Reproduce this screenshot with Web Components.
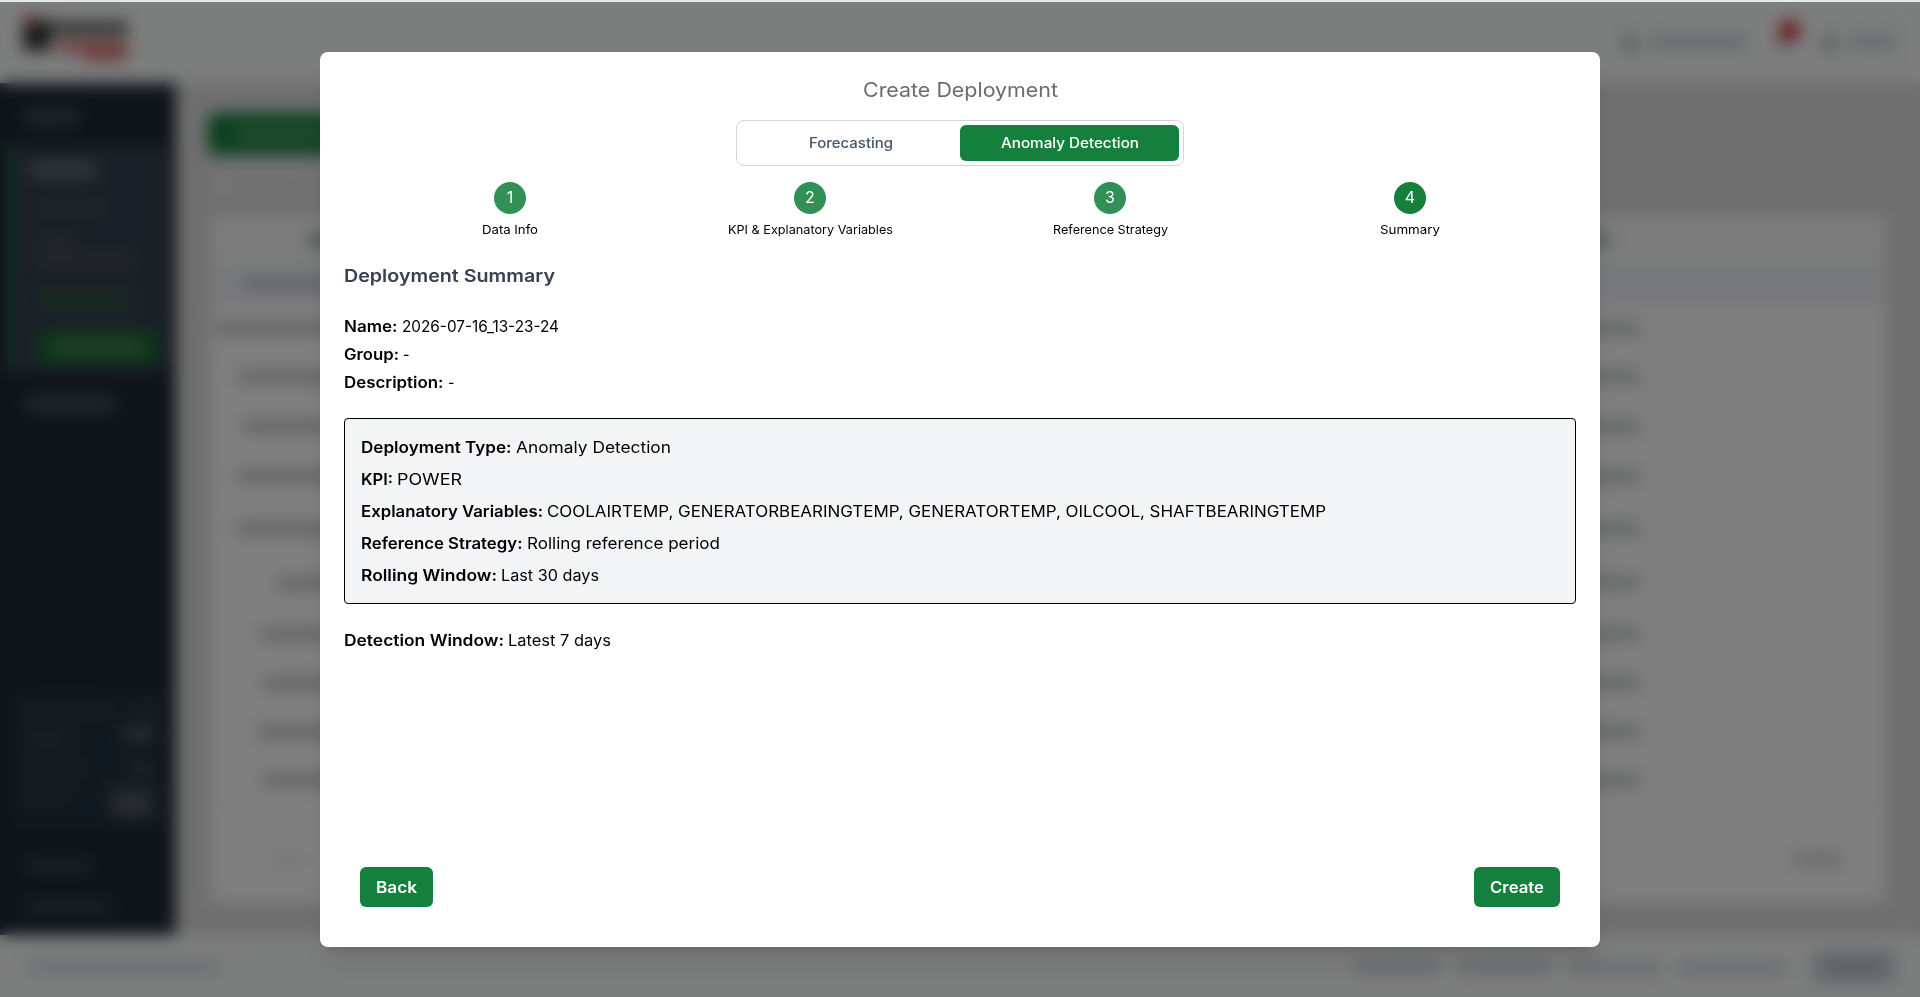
<!DOCTYPE html>
<html lang="en">
<head>
<meta charset="utf-8">
<title>Create Deployment</title>
<style>
html, body {
    margin: 0;
    height: 100%;
    overflow: hidden;
}
body {
    font-family: Inter, "Open Sans", sans-serif;
    font-size: 15.5px;
    color: #000;
    background: #fff;
}
</style>
</head>
<body>
<app-page>
	<app-header slot="header"></app-header>
	<side-nav slot="nav"></side-nav>
	<deployment-table></deployment-table>
	<app-footer slot="footer"></app-footer>
</app-page>

<modal-dialog>
	<fit-text slot="title" width="195">Create Deployment</fit-text>
	<type-toggle slot="toggle">
		<toggle-option><fit-text width="84">Forecasting</fit-text></toggle-option>
		<toggle-option active><fit-text width="138">Anomaly Detection</fit-text></toggle-option>
	</type-toggle>
	<step-bar slot="steps">
		<step-item number="1"><fit-text width="56">Data Info</fit-text></step-item>
		<step-item number="2"><fit-text width="165">KPI &amp; Explanatory Variables</fit-text></step-item>
		<step-item number="3"><fit-text width="115">Reference Strategy</fit-text></step-item>
		<step-item number="4" active><fit-text width="60">Summary</fit-text></step-item>
	</step-bar>
	<deployment-summary></deployment-summary>
	<app-button slot="actions"><fit-text width="41">Back</fit-text></app-button>
	<app-button slot="actions"><fit-text width="54">Create</fit-text></app-button>
</modal-dialog>

<script>
function attach(el, html) {
  const template = document.createElement('template');
  template.innerHTML = html;
  const root = el.attachShadow({ mode: 'open' });
  root.append(template.content.cloneNode(true));
  return root;
}

// stretches the letters so that the text takes exactly the given width
class FitText extends HTMLElement {
  constructor() {
    super();
    this.root = attach(this, `
<style>
:host { display: inline-block; white-space: nowrap; }
span { display: inline-block; transform-origin: 0 50%; }
</style>
<span><slot></slot></span>`);
  }

  connectedCallback() {
    requestAnimationFrame(() => this.fit());
  }

  fit() {
    const target = Number(this.getAttribute('width'));
    if (!target) return;
    const span = this.root.querySelector('span');
    const natural = span.getBoundingClientRect().width;
    this.style.width = `${target}px`;
    span.style.transform = `scaleX(${target / natural})`;
  }
}

// placeholder line for content that is still behind the overlay
class TextStub extends HTMLElement {
  constructor() {
    super();
    attach(this, `
<style>
:host {
    display: block;
    flex: none;
    width: var(--w, 60px);
    height: var(--h, 10px);
    margin-left: var(--x, 0);
    background: var(--c, #d0d0d0);
    border-radius: 3px;
}
</style>`);
  }
}

class AppPage extends HTMLElement {
  constructor() {
    super();
    attach(this, `
<style>
:host {
    display: grid;
    box-sizing: border-box;
    width: 100vw;
    height: 100vh;
    grid-template: 83px 1fr 62px / 176px 1fr;
    background: #dedede;
}
.header, .footer { grid-column: 1 / 3; }
main { padding: 30px 34px 33px; min-width: 0; }
</style>
<div class="header"><slot name="header"></slot></div>
<slot name="nav"></slot>
<main><slot></slot></main>
<div class="footer"><slot name="footer"></slot></div>`);
  }
}

class AppHeader extends HTMLElement {
  constructor() {
    super();
    attach(this, `
<style>
:host {
    display: flex;
    box-sizing: border-box;
    height: 83px;
    padding: 0 25px 0 20px;
    justify-content: space-between;
    background: #f9fcfa;
    border-top: 2px solid #e5eaea;
    --c: #d4d6dc;
}
.logo { width: 112px; height: 66px; }
.links { display: flex; align-items: center; gap: 12px; }
.bell { position: relative; margin: 0 20px 0 18px; }
.badge {
    position: absolute;
    left: 2px;
    top: -15px;
    width: 21px;
    height: 21px;
    border-radius: 50%;
    background: #dc2638;
}
</style>
<svg class="logo" viewBox="0 0 112 66">
	<rect x="3" y="18" width="28" height="31" fill="#383838"/>
	<rect x="30" y="19" width="78" height="14" fill="#6a6a6a"/>
	<circle cx="9" cy="17" r="6" fill="#e07070"/>
	<rect x="38" y="39" width="70" height="11" fill="#dc7070"/>
	<rect x="64" y="50" width="42" height="9" fill="#dc8080"/>
</svg>
<div class="links">
	<text-stub style="--w:16px;--h:16px;--c:#bcbfc5"></text-stub>
	<text-stub style="--w:97px;--h:15px"></text-stub>
	<div class="bell"><text-stub style="--w:14px;--h:15px;--c:#cfd0d0"></text-stub><div class="badge"></div></div>
	<text-stub style="--w:14px;--h:16px;--c:#b7bac0"></text-stub>
	<text-stub style="--w:46px;--h:15px"></text-stub>
</div>`);
  }
}

class SideNav extends HTMLElement {
  constructor() {
    super();
    attach(this, `
<style>
:host {
    display: flex;
    flex-direction: column;
    box-sizing: border-box;
    padding: 26px 8px 22px;
    background: #1f2937;
    --c: #454c58;
}
.group {
    margin-top: 22px;
    box-sizing: border-box;
    height: 225px;
    padding: 15px 10px 0 18px;
    background: #374151;
    border-left: 4px solid #15803d;
    border-radius: 4px;
}
.active {
    display: flex;
    align-items: center;
    box-sizing: border-box;
    height: 33px;
    margin: 20px 0 0 8px;
    padding-left: 14px;
    background: #14702c;
    border-radius: 6px;
}
.stats {
    display: grid;
    grid-template-columns: 1fr auto;
    align-content: start;
    box-sizing: border-box;
    height: 131px;
    margin: auto 6px 36px;
    padding: 10px 9px;
    row-gap: 14px;
    background: #21333f;
    --c: #303944;
}
.stats > :nth-child(even) { justify-self: end; }
</style>
<text-stub style="--w:54px;--h:15px;--x:16px"></text-stub>
<div class="group">
	<text-stub style="--w:66px;--h:17px;--c:#646b78"></text-stub>
	<text-stub style="--w:68px;--h:11px;--x:6px;--c:#454b58;margin-top:24px"></text-stub>
	<text-stub style="--w:34px;--h:12px;--x:8px;--c:#484d58;margin-top:22px"></text-stub>
	<text-stub style="--w:94px;--h:13px;--x:8px;--c:#484d58;margin-top:5px"></text-stub>
	<text-stub style="--w:92px;--h:22px;--x:8px;--c:#305544;margin-top:24px"></text-stub>
	<div class="active"><text-stub style="--w:92px;--h:15px;--c:#4b8059"></text-stub></div>
</div>
<text-stub style="--w:92px;--h:14px;--x:16px;margin-top:26px;--c:#4a505c"></text-stub>
<div class="stats">
	<text-stub style="--w:88px;--h:9px"></text-stub>
	<text-stub style="--w:12px;--h:10px;--c:#3d4550"></text-stub>
	<text-stub style="--w:46px;--h:22px"></text-stub>
	<text-stub style="--w:30px;--h:13px;--c:#5a606b"></text-stub>
	<text-stub style="--w:64px;--h:10px"></text-stub>
	<text-stub style="--w:22px;--h:11px;--c:#464d59"></text-stub>
	<text-stub style="--w:48px;--h:10px"></text-stub>
	<text-stub style="--w:42px;--h:30px;--c:#50565f"></text-stub>
</div>
<text-stub style="--w:68px;--h:12px;--x:16px;--c:#39424e"></text-stub>
<text-stub style="--w:88px;--h:12px;--x:16px;--c:#39424e;margin-top:29px"></text-stub>`);
  }
}

class DeploymentTable extends HTMLElement {
  constructor() {
    super();
    // left inset of the first column and row heights
    const rows = [
      [4, 48], [28, 49], [33, 50], [26, 50], [26, 55], [67, 53],
      [50, 49], [52, 49], [48, 49], [52, 48],
    ];
    attach(this, `
<style>
:host { display: flex; flex-direction: column; height: 100%; }
.create {
    display: flex;
    align-items: center;
    width: 220px;
    height: 42px;
    margin-left: -2px;
    background: #15803d;
    border-radius: 6px;
}
.search {
    display: flex;
    align-items: center;
    width: 300px;
    height: 36px;
    margin-top: 12px;
    padding-left: 20px;
    background: #e6e6e6;
    border-radius: 6px;
}
.card {
    flex: 1;
    display: flex;
    flex-direction: column;
    margin-top: 14px;
    background: #fff;
    border-radius: 6px;
}
.row {
    display: flex;
    align-items: center;
    justify-content: space-between;
    box-sizing: border-box;
    flex: none;
    padding-right: 246px;
}
.head { height: 46px; padding-right: 277px; background: #f8fbf8; }
.group { height: 41px; background: #f1f2f6; }
.pager {
    display: flex;
    flex: 1;
    align-items: center;
    justify-content: space-between;
    padding: 12px 43px 0 62px;
    border-top: 1px solid #f2f2f2;
}
</style>
<div class="create"><text-stub style="--w:160px;--h:14px;--x:24px;--c:#45995e"></text-stub></div>
<div class="search"><text-stub style="--w:78px;--h:10px;--c:#dadcda"></text-stub></div>
<div class="card">
	<div class="row head">
		<text-stub style="--w:100px;--h:14px;--x:98px;--c:#a9abb5"></text-stub>
		<text-stub style="--w:100px;--h:14px;--c:#a9abb5"></text-stub>
	</div>
	<div class="row group"><text-stub style="--w:180px;--h:14px;--x:34px;--c:#cacbd1"></text-stub></div>
	${rows.map(([x, h]) => `<div class="row" style="height:${h}px">
		<text-stub style="--w:${230 - x}px;--h:14px;--x:${x}px;--c:#ccc"></text-stub>
		<text-stub style="--w:110px;--h:15px;--c:#cdd1d1"></text-stub>
	</div>`).join('')}
	<div class="pager">
		<text-stub style="--w:34px;--h:10px;--c:#ececec"></text-stub>
		<text-stub style="--w:50px;--h:15px;--c:#d8d8d8"></text-stub>
	</div>
</div>`);
  }
}

class AppFooter extends HTMLElement {
  constructor() {
    super();
    attach(this, `
<style>
:host {
    display: flex;
    align-items: center;
    box-sizing: border-box;
    height: 62px;
    gap: 17px;
    padding: 2px 24px 0 27px;
    background: #f9fbfa;
    --c: #dedfe4;
}
.copy { margin-right: auto; }
.button {
    display: flex;
    align-items: center;
    justify-content: center;
    width: 84px;
    height: 34px;
    margin-left: 9px;
    background: #d1d3d9;
    border-radius: 6px;
}
</style>
<text-stub class="copy" style="--w:195px;--h:14px"></text-stub>
<text-stub style="--w:88px;--h:17px"></text-stub>
<text-stub style="--w:94px;--h:17px"></text-stub>
<text-stub style="--w:92px;--h:17px"></text-stub>
<text-stub style="--w:108px;--h:17px"></text-stub>
<div class="button"><text-stub style="--w:48px;--h:12px;--c:#b8bac2"></text-stub></div>`);
  }
}

class ModalDialog extends HTMLElement {
  constructor() {
    super();
    attach(this, `
<style>
:host {
    position: fixed;
    inset: 2px 0 0;
    display: flex;
    align-items: center;
    justify-content: center;
    background: rgba(0, 0, 0, 0.5);
    backdrop-filter: blur(8px);
}
.dialog {
    display: flex;
    flex-direction: column;
    align-items: center;
    box-sizing: border-box;
    width: 1280px;
    height: 895px;
    padding: 24px 24px 40px;
    background: #fff;
    border-radius: 8px;
    box-shadow: 0 20px 25px -5px rgba(0, 0, 0, 0.1), 0 8px 10px -6px rgba(0, 0, 0, 0.1);
}
h2 {
    margin: 0 0 16px;
    font-size: 20px;
    line-height: 28px;
    font-weight: 400;
    color: #6b6b6b;
}
slot[name="steps"] { display: block; margin-top: 16px; }
.body { flex: 1; align-self: stretch; }
.actions {
    display: flex;
    align-self: stretch;
    justify-content: space-between;
    padding: 0 16px;
}
</style>
<div class="dialog" role="dialog">
	<h2><slot name="title"></slot></h2>
	<slot name="toggle"></slot>
	<slot name="steps"></slot>
	<div class="body"><slot></slot></div>
	<div class="actions"><slot name="actions"></slot></div>
</div>`);
  }
}

class TypeToggle extends HTMLElement {
  constructor() {
    super();
    attach(this, `
<style>
:host {
    display: grid;
    grid-template-columns: 1fr 1fr;
    box-sizing: border-box;
    width: 448px;
    height: 46px;
    padding: 4px;
    border: 1px solid #d1d5db;
    border-radius: 8px;
}
</style>
<slot></slot>`);
  }
}

class ToggleOption extends HTMLElement {
  constructor() {
    super();
    attach(this, `
<style>
:host {
    display: flex;
    align-items: center;
    justify-content: center;
    font-size: 13.8px;
    font-weight: 500;
    color: #475569;
    border-radius: 6px;
}
:host([active]) { color: #fff; background: #15803d; }
</style>
<slot></slot>`);
  }
}

class StepBar extends HTMLElement {
  constructor() {
    super();
    attach(this, `
<style>
:host { display: grid; grid-template-columns: repeat(4, 300px); }
</style>
<slot></slot>`);
  }
}

class StepItem extends HTMLElement {
  constructor() {
    super();
    attach(this, `
<style>
:host {
    display: flex;
    flex-direction: column;
    align-items: center;
    gap: 8px;
    font-size: 11.8px;
    line-height: 16px;
}
.number {
    width: 32px;
    height: 32px;
    border-radius: 50%;
    background: #319056;
    color: #fff;
    font-size: 16px;
    line-height: 31px;
    text-align: center;
}
:host([active]) .number { background: #15803d; }
</style>
<div class="number">${this.getAttribute('number')}</div>
<div><slot></slot></div>`);
  }
}

class SummaryRow extends HTMLElement {
  constructor() {
    super();
    attach(this, `
<style>
:host { display: flex; line-height: 26px; height: 24px; }
.label { font-weight: 600; margin-right: 4px; }
</style>
<fit-text class="label" width="${this.getAttribute('label-width')}">${this.getAttribute('label')}:</fit-text>
<fit-text width="${this.getAttribute('value-width')}">${this.getAttribute('value')}</fit-text>`);
  }
}

class DeploymentSummary extends HTMLElement {
  constructor() {
    super();
    attach(this, `
<style>
:host { display: block; }
h3 {
    margin: 24px 0 0;
    font-size: 17.6px;
    line-height: 28px;
    font-weight: 600;
    color: #374151;
}
.info { display: grid; gap: 4px; margin-top: 24px; }
.box {
    display: grid;
    gap: 8px;
    box-sizing: border-box;
    height: 186px;
    margin: 24px 0;
    padding: 16px;
    background: #f3f4f6;
    border: 1px solid #000;
    border-radius: 4px;
}
</style>
<h3><fit-text width="211">Deployment Summary</fit-text></h3>
<div class="info">
	<summary-row label="Name" label-width="53.5" value="2026-07-16_13-23-24" value-width="157"></summary-row>
	<summary-row label="Group" label-width="55" value="-" value-width="6.5"></summary-row>
	<summary-row label="Description" label-width="99.5" value="-" value-width="6.5"></summary-row>
</div>
<div class="box">
	<summary-row label="Deployment Type" label-width="150.5" value="Anomaly Detection" value-width="155"></summary-row>
	<summary-row label="KPI" label-width="32" value="POWER" value-width="65"></summary-row>
	<summary-row label="Explanatory Variables" label-width="182" value="COOLAIRTEMP, GENERATORBEARINGTEMP, GENERATORTEMP, OILCOOL, SHAFTBEARINGTEMP" value-width="779"></summary-row>
	<summary-row label="Reference Strategy" label-width="161.5" value="Rolling reference period" value-width="193"></summary-row>
	<summary-row label="Rolling Window" label-width="136" value="Last 30 days" value-width="98"></summary-row>
</div>
<summary-row label="Detection Window" label-width="160" value="Latest 7 days" value-width="103"></summary-row>`);
  }
}

class AppButton extends HTMLElement {
  constructor() {
    super();
    attach(this, `
<style>
:host {
    display: block;
    height: 24px;
    padding: 8px 16px;
    line-height: 25px;
    font-weight: 600;
    color: #fff;
    background: #15803d;
    border-radius: 6px;
}
</style>
<slot></slot>`);
  }
}

customElements.define('fit-text', FitText);
customElements.define('text-stub', TextStub);
customElements.define('app-page', AppPage);
customElements.define('app-header', AppHeader);
customElements.define('side-nav', SideNav);
customElements.define('deployment-table', DeploymentTable);
customElements.define('app-footer', AppFooter);
customElements.define('modal-dialog', ModalDialog);
customElements.define('type-toggle', TypeToggle);
customElements.define('toggle-option', ToggleOption);
customElements.define('step-bar', StepBar);
customElements.define('step-item', StepItem);
customElements.define('summary-row', SummaryRow);
customElements.define('deployment-summary', DeploymentSummary);
customElements.define('app-button', AppButton);
</script>
</body>
</html>
